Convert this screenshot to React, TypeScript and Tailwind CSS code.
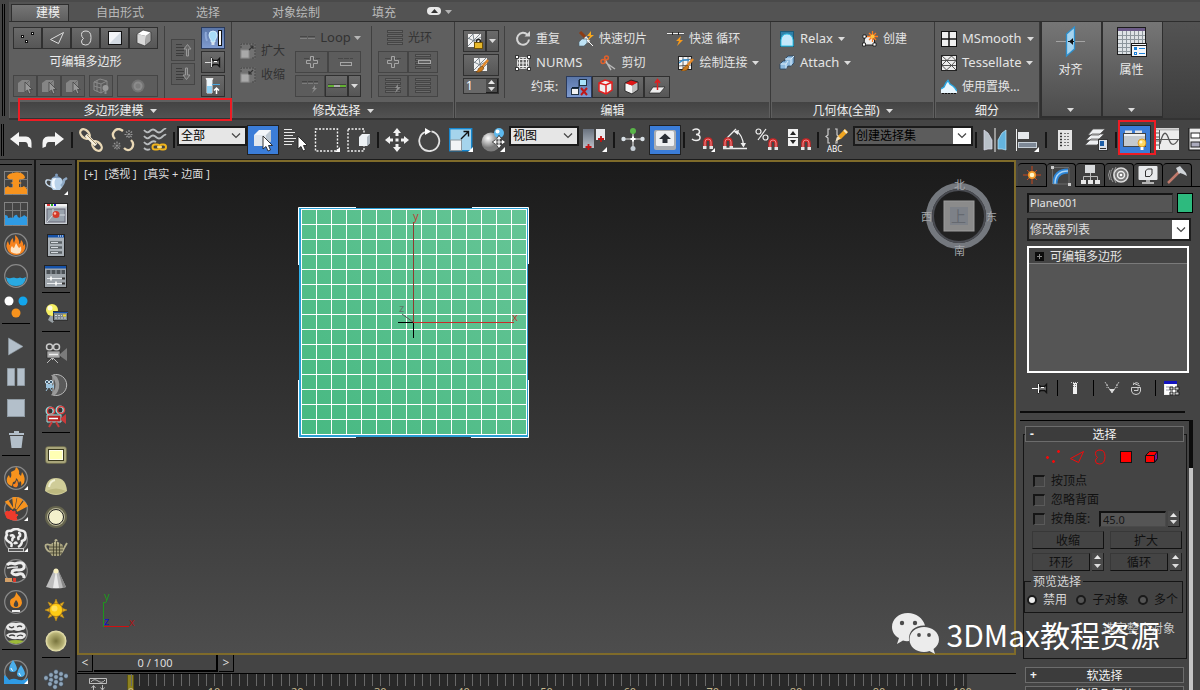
import React from "react";

type Kids = { children?: React.ReactNode };

function Ic({ w = 16, h, children }: Kids & { w?: number; h?: number }) {
  const hh = h ?? w;
  return (
    <svg width={w} height={hh} viewBox={`0 0 ${w} ${hh}`} fill="none" className="block shrink-0" aria-hidden="true">
      {children}
    </svg>
  );
}

/* ---------- shared pieces ---------- */

function Caret({ className = "" }: { className?: string }) {
  return (
    <svg width="7" height="4" viewBox="0 0 7 4" className={"block shrink-0 " + className} aria-hidden="true">
      <path d="M0 0H7L3.5 4Z" fill="#dcdcdc" />
    </svg>
  );
}

function Chevron() {
  return (
    <Ic w={10} h={6}>
      <path d="M1 .5L5 4.5L9 .5" stroke="#444" strokeWidth="1.2" />
    </Ic>
  );
}

function RBtn({ label, on, dim, className = "", children }: Kids & { label: string; on?: boolean; dim?: boolean; className?: string }) {
  return (
    <button
      type="button"
      aria-label={label}
      className={
        "flex h-[22px] shrink-0 items-center justify-center border " +
        (on
          ? "border-[#2a3a5c] bg-linear-to-b from-[#5a76a8] to-[#7f9bd0] "
          : dim
            ? "border-[#454545] bg-[#5c5c5c] "
            : "border-[#303030] bg-linear-to-b from-[#6a6a6a] to-[#565656] ") +
        className
      }
    >
      {children}
    </button>
  );
}

function Cmd({ icon, text, dim, caret, latin, className = "" }: { icon: React.ReactNode; text: string; dim?: boolean; caret?: boolean; latin?: boolean; className?: string }) {
  return (
    <button type="button" className={"flex h-6 shrink-0 items-center gap-[5px] whitespace-nowrap " + (dim ? "text-[#323232] " : "text-[#e4e4e4] ") + (latin ? "text-[13px] " : "text-xs ") + className}>
      {icon}
      <span>{text}</span>
      {caret && <Caret />}
    </button>
  );
}

function Panel({ title, caret, className = "", children }: Kids & { title: string; caret?: boolean; className?: string }) {
  return (
    <section className={"relative flex shrink-0 flex-col border-r border-[#3a3a3a] bg-[#5f5f5f] " + className}>
      <div className="flex min-h-0 flex-1">{children}</div>
      <button type="button" className="mx-px flex h-4 items-center justify-center gap-1.5 bg-linear-to-b from-[#434343] to-[#525252] pt-0.5 text-xs leading-4 text-[#f0f0f0]">
        {title}
        {caret && <Caret />}
      </button>
    </section>
  );
}

function Rule() {
  return <div className="mt-1 h-[72px] w-px shrink-0 bg-[#404040]" />;
}

function Steppers({ label }: { label: string }) {
  return (
    <span className="flex w-3 shrink-0 flex-col justify-around border-r border-b border-[#1e1e1e] bg-[#4b4b4b]">
      <button type="button" aria-label={label + "增加"} className="flex justify-center">
        <Ic w={7} h={4}><path d="M0 4H7L3.5 0Z" fill="#e8e8e8" /></Ic>
      </button>
      <button type="button" aria-label={label + "减少"} className="flex justify-center">
        <Caret />
      </button>
    </span>
  );
}

/* ---------- ribbon icons ---------- */

const Vertices = () => (
  <Ic w={18} h={16}>
    <g fill="#fff" stroke="#111">
      <rect x="2.5" y="5.5" width="2" height="2" />
      <rect x="12.5" y="2.5" width="2" height="2" />
      <rect x="6.5" y="10.5" width="2" height="2" />
    </g>
  </Ic>
);
const RedVertices = () => (
  <Ic w={18} h={16}>
    <path d="M3.5 7V10M2 8.5H5M14.5 1V4M13 2.5H16M9.5 11V14M8 12.5H11" stroke="#f20a0a" strokeWidth="1.4" />
  </Ic>
);
const EdgeTri = ({ c = "#ddd" }) => (
  <Ic w={18} h={16}>
    <path d="M2.5 9.5L15.5 2.5L10.5 13.5Z" stroke={c} />
  </Ic>
);
const Border = ({ c = "#ddd" }) => (
  <Ic w={16} h={16}>
    <path d="M3.5 4.5Q3.5 1 8 1Q13 1 13 7.5Q13 15 7.5 15Q3.5 15 3.5 12Q3.5 9.5 5.5 8.5Q3.5 7 3.5 4.5Z" stroke={c} />
  </Ic>
);
const Poly = () => (
  <Ic w={16} h={16}>
    <rect x="1.5" y="1.5" width="13" height="13" fill="#f3f5f8" stroke="#111" />
    <path d="M2 14L14 2V14Z" fill="#d3dae2" />
  </Ic>
);
const Cube = () => (
  <Ic w={18}>
    <path d="M2 5L8 1L16 3L11 7Z" fill="#fff" />
    <path d="M2 5L11 7L10 17L2 14Z" fill="#d9d9d9" />
    <path d="M11 7L16 3V12L10 17Z" fill="#a9a9a9" />
    <path d="M2 5L8 1L16 3V12L10 17L2 14Z" stroke="#333" strokeWidth=".7" />
  </Ic>
);
const ConsEdge = () => (
  <Ic w={18}>
    <path d="M3 5L9 2L16 4V12L10 16L3 13Z" fill="#f0f0f0" />
    <path d="M3 5L9 2L16 4V12L10 16L3 13ZM3 5L10 7L16 4M10 7V16" stroke="#e21f1f" strokeWidth="1.5" />
  </Ic>
);
const ConsFace = () => (
  <Ic w={18}>
    <path d="M3 5L10 7.5V16L3 13Z" fill="#f7f7f7" />
    <path d="M10 7.5L16 4V12L10 16Z" fill="#bdbdbd" />
    <path d="M3 5L9 2L16 4L10 7.5Z" fill="#e01515" />
    <path d="M3 5L9 2L16 4V12L10 16L3 13Z" stroke="#222" strokeWidth=".9" />
  </Ic>
);
const CubeCursor = () => (
  <Ic w={18} h={18}>
    <path d="M2 6L6 3H14V11L10 15H2Z" fill="#858585" />
    <path d="M10 15V7L14 3" stroke="#6a6a6a" />
    <path d="M9 5V15L11.5 13L13 17L15 16L13.5 12.5H16.5Z" fill="#9a9a9a" stroke="#444" strokeWidth=".8" />
  </Ic>
);
const CageBulb = () => (
  <Ic w={18} h={18}>
    <path d="M2 5L8 2L15 4V12L9 16L2 13ZM2 5L9 7L15 4M9 7V16M2 9L9 11M5 3.5V14.5" stroke="#8a8a8a" />
    <circle cx="13.5" cy="11" r="3" fill="#999" />
    <rect x="12.5" y="14" width="2" height="3" fill="#888" />
  </Ic>
);
const Disc = () => (
  <Ic w={16}>
    <circle cx="8" cy="8" r="6.5" fill="#737373" />
    <circle cx="8" cy="8" r="4.5" fill="#8b8b8b" />
    <circle cx="8" cy="8" r="2.5" fill="#7c7c7c" />
  </Ic>
);
const ListArrow = ({ up = false }) => (
  <Ic w={18} h={16}>
    <path d="M2 2.5H8M2 5.5H10M2 8.5H10M2 11.5H10M2 13.5H9" stroke="#3c3c3c" />
    {up ? (
      <path d="M12.5 14V7H10L13.5 2.5L17 7H14.5V14Z" fill="#666" stroke="#999" />
    ) : (
      <path d="M11.5 2V9H9L12.5 13.5L16 9H13.5V2Z" fill="#666" stroke="#999" />
    )}
  </Ic>
);
const BulbBar = () => (
  <Ic w={18} h={18}>
    <path d="M9 2Q13 2 13 6Q13 8.5 11 11V13H7V11Q5 8.5 5 6Q5 2 9 2Z" fill="#a8dcf7" stroke="#e0f4ff" strokeWidth=".8" />
    <rect x="7.5" y="13" width="3" height="3" fill="#d6e2ee" />
    <path d="M2 3Q1 7 3 12" stroke="#8fa9d8" strokeWidth="2" />
    <rect x="14.5" y="1.5" width="3" height="15" fill="#fff" stroke="#111" />
  </Ic>
);
const Pin = ({ c = "#dedede" }) => (
  <Ic w={18} h={12}>
    <path d="M1 6.5H8" stroke={c} />
    <path d="M7.5 2.5L9.5 4.5H13.5L15.5 2.5V10.5L13.5 8.5H9.5L7.5 10.5Z" fill="#777" stroke="#111" strokeWidth="1.4" />
    <path d="M10 5.5H13" stroke="#fff" />
    <path d="M7.5 2V11" stroke={c} />
  </Ic>
);
const Tube = () => (
  <Ic w={18} h={18}>
    <path d="M2 1.5H9L8 3V16H3V3Z" fill="#eaf6fc" stroke="#eee" />
    <path d="M3 9H8V16H3Z" fill="#8fd0f2" />
    <path d="M8 7.5H16" stroke="#4ba6dd" />
    <path d="M12.5 17V11M10 13.5L12.5 11L15 13.5" stroke="#fff" strokeWidth="1.5" />
  </Ic>
);
const Grow = ({ out = false }) => (
  <Ic w={16}>
    <rect x=".5" y=".5" width="15" height="15" fill="#727272" />
    <rect x="1" y="7" width="8" height="8" fill="#a9a9a9" stroke="#8a8a8a" />
    <path d="M1 5V1H15V15H11" stroke="#444" strokeDasharray="2 1" />
    {out ? (
      <path d="M9 7L13 3M10 3H13V6" stroke="#333" strokeWidth="1.2" />
    ) : (
      <path d="M13 3L9 7M9 4V7H12" stroke="#333" strokeWidth="1.2" />
    )}
  </Ic>
);
const Dashes = () => (
  <Ic w={18} h={6}>
    <path d="M1 1.5H17" stroke="#474747" strokeDasharray="7 1" />
    <path d="M1 3.5H17" stroke="#808080" strokeDasharray="7 1" />
  </Ic>
);
const Plus = () => (
  <Ic w={20} h={16}>
    <path d="M2 4.5H18" stroke="#474747" strokeDasharray="5 1" />
    <path d="M8.5 2.5H11.5V6.5H15.5V9.5H11.5V13.5H8.5V9.5H4.5V6.5H8.5Z" fill="#5f5f5f" stroke="#a6a6a6" />
  </Ic>
);
const Minus = () => (
  <Ic w={20} h={16}>
    <path d="M3 4.5H18" stroke="#474747" strokeDasharray="5 1" />
    <rect x="5.5" y="8.5" width="11" height="3" stroke="#a6a6a6" />
  </Ic>
);
const LoopBolt = () => (
  <Ic w={20} h={16}>
    <path d="M2 3.5H18" stroke="#454545" strokeDasharray="5 1" />
    <path d="M2 5.5H18" stroke="#7c7c7c" strokeDasharray="5 1" />
    <path d="M15 7L12 11H14L12 15L17 10H15Z" fill="#8d8d8d" />
  </Ic>
);
const GreenLoop = () => (
  <Ic w={18} h={6}>
    <path d="M0 3H18" stroke="#222" strokeWidth="3" />
    <path d="M0 3H6M12 3H18" stroke="#7adf3a" strokeWidth="1.5" />
    <path d="M6 3H12" stroke="#ddd" strokeWidth="1.5" />
  </Ic>
);
const Rings = ({ mid = false, bolt = false }) => (
  <Ic w={18} h={16}>
    <g stroke="#454545" fill="#6a6a6a">
      <rect x="1.5" y=".5" width="15" height="2" />
      <rect x="1.5" y="4.5" width="15" height="2" />
      <rect x="1.5" y="8.5" width="15" height="2" />
      <rect x="1.5" y="12.5" width="15" height="2" />
    </g>
    {mid && <rect x="4.5" y="6.5" width="12" height="3" fill="#5f5f5f" stroke="#a6a6a6" />}
    {bolt && <path d="M14 6L11 10H13L11 15L17 9H14Z" fill="#8d8d8d" />}
  </Ic>
);
function Brush() {
  return (
    <g>
      <path d="M16 4L10 11" stroke="#e2882a" strokeWidth="2.5" />
      <path d="M10 10L12 12Q10 17 4 16Q6 15 6.5 12.5Z" fill="#c9781b" stroke="#6a3c0a" strokeWidth=".6" />
    </g>
  );
}
const MeshTile = ({ lock = false }) => (
  <Ic w={18} h={18}>
    <rect x="2" y="2" width="13" height="13" fill="#f2f2f2" />
    <path d="M2 7L7 2M2 14L14 2M8 15L15 8M2 6L8 9L15 5M7 2L9 15" stroke="#6f7a82" strokeWidth=".9" />
    {lock ? (
      <g>
        <path d="M10.5 11V9.5Q10.5 7.5 12.5 7.5Q14.5 7.5 14.5 9.5V11" stroke="#222" strokeWidth="1.5" />
        <rect x="8.5" y="10.5" width="8" height="6" fill="#e8b92a" stroke="#6f5208" />
      </g>
    ) : (
      <Brush />
    )}
  </Ic>
);
const Repeat = () => (
  <Ic w={16}>
    <path d="M12.5 3.8A6 6 0 1 0 14 8.5" stroke="#d5d5d5" strokeWidth="2" />
    <path d="M9.5 5.5H15V0Z" fill="#d5d5d5" />
  </Ic>
);
const Nurms = () => (
  <Ic w={16}>
    <path d="M3 4.5H13M3 8H13M3 11.5H13M4.5 3V13M8 2V14M11.5 3V13" stroke="#f0f0f0" strokeWidth="1.2" />
    <rect x="2.5" y="2.5" width="11" height="11" rx="3" stroke="#ddd" />
    <path d="M.5 .5H3.5V3.5H.5ZM12.5 .5H15.5V3.5H12.5ZM.5 12.5H3.5V15.5H.5ZM12.5 12.5H15.5V15.5H12.5Z" fill="#fff" stroke="#111" strokeWidth=".8" />
  </Ic>
);
const QSlice = () => (
  <Ic w={16}>
    <path d="M7 6L11 11" stroke="#e9e9e9" strokeWidth="3" />
    <path d="M2 1L7 6" stroke="#8d3c14" strokeWidth="3" />
    <path d="M1 11L4 8H9V12L6 15H1Z" fill="#bfe3f5" stroke="#49636f" strokeWidth=".6" />
    <path d="M13 0L9 5H12L9 10L16 4H13Z" fill="#f8a81c" />
    <path d="M9 9L15 15" stroke="#fff" />
  </Ic>
);
const QLoop = () => (
  <Ic w={17} h={16}>
    <path d="M0 2.5H17" stroke="#222" strokeWidth="3" />
    <path d="M0 2.5H17" stroke="#eee" strokeWidth="1.5" strokeDasharray="5 1" />
    <path d="M14 5L9 10H12L10 15L16 9H13Z" fill="#f79a1c" />
  </Ic>
);
const Scissor = () => (
  <Ic w={16}>
    <path d="M5 7L15 14M5 4L8 10L11 15" stroke="#b9b9b9" strokeWidth="1.5" />
    <circle cx="3" cy="6.5" r="2" stroke="#e2602a" strokeWidth="1.5" />
    <circle cx="6.5" cy="2.8" r="1.9" stroke="#e2602a" strokeWidth="1.5" />
  </Ic>
);
const PaintConnect = () => (
  <Ic w={17} h={16}>
    <rect x="1.5" y="1.5" width="13" height="13" fill="#f4f4f4" stroke="#222" />
    <path d="M1.5 6L15 4M1.5 11L14 10M6 1.5V14.5M11 1.5V14" stroke="#444" strokeWidth=".8" />
    <path d="M2 8L6 5H12" stroke="#2d8fd6" strokeWidth="1.3" />
    <Brush />
  </Ic>
);
const ConsNone = () => (
  <Ic w={20} h={18}>
    <rect x="10.5" y="1.5" width="7" height="6" fill="#a9e2fb" stroke="#234" />
    <rect x="2.5" y="10.5" width="7" height="6" fill="#f2f2f2" stroke="#234" />
    <path d="M3 9.5H10V2" stroke="#123" />
    <path d="M12 10L18 17M18 10L12 17" stroke="#c01818" strokeWidth="2" />
  </Ic>
);
const ConsNormal = () => (
  <Ic w={18} h={18}>
    <path d="M1 15L5 9H17L12 15Z" fill="#eee" stroke="#222" strokeWidth=".7" />
    <path d="M9.5 12V3M7 5L9.5 1.5L12 5" stroke="#e02020" strokeWidth="1.5" />
  </Ic>
);
const Relax = () => (
  <Ic w={16}>
    <rect x="1.5" y=".5" width="13" height="15" fill="#2f7fa8" stroke="#1c5a78" />
    <path d="M2 15V9Q3 3 8 3Q13 3 14 9V15Z" fill="#c4e8fb" stroke="#35c6ea" />
  </Ic>
);
const Attach = () => (
  <Ic w={16}>
    <path d="M1 9L4 6H6V4L9 1H15V8L12 11H9L7 14H1Z" fill="#8db9de" stroke="#23405c" strokeWidth=".8" />
    <path d="M1.5 9H7V13.5M7 9L9 6M6 4H12V10.5M12 4L15 1" stroke="#d9ecfa" />
  </Ic>
);
const Create = () => (
  <Ic w={17} h={16}>
    <path d="M3.5 5.5H10L13.5 9V14H3Z" fill="#eee" stroke="#222" />
    <path d="M2 4H5V7H2ZM1.5 12H4.5V15H1.5ZM12 12H15V15H12Z" fill="#fff" stroke="#111" strokeWidth=".8" />
    <path d="M11.5 0V11M6 5.5H17M8 2L15 9M15 2L8 9" stroke="#ff7a1c" strokeWidth="1.3" />
    <circle cx="11.5" cy="5.5" r="2" fill="#ffc23c" />
  </Ic>
);
const MSmooth = () => (
  <Ic w={16}>
    <rect x=".5" y=".5" width="15" height="15" fill="#f0f0f0" stroke="#111" />
    <path d="M8 1V15M1 8H15" stroke="#111" strokeWidth="1.5" />
  </Ic>
);
const Tess = () => (
  <Ic w={16}>
    <rect x=".5" y=".5" width="15" height="15" fill="#ededed" stroke="#222" />
    <path d="M1 5.5H15M1 10.5H15M1 1L6 5.5L10.5 1L15 5.5M1 10L5.5 5.5L10.5 10.5L15 5.5M1 10.5L5.5 15L10.5 10.5L15 15" stroke="#444" strokeWidth=".9" />
  </Ic>
);
const Displace = () => (
  <Ic w={16}>
    <path d="M0 14V10L3 8L5 4L7 1L9 5L12 7L14 9L16 12V14Z" fill="#e9f6fd" />
    <path d="M0 10L3 8L5 4L7 1.5L9 5L12 7L14 9L16 12" stroke="#29a5df" strokeWidth="1.5" />
    <path d="M1 14.5H15" stroke="#111" strokeDasharray="2 1" />
  </Ic>
);
const AlignBig = () => (
  <Ic w={30} h={32}>
    <path d="M0 15.5H29" stroke="#a4a4a4" />
    <path d="M10.5 8L18.5 1V23L10.5 30Z" fill="#a6d4ef" stroke="#2f8fcc" strokeWidth="1.3" />
    <path d="M12 15.5H18M16.5 12.5V18.5" stroke="#111" />
    <path d="M13 15.5L16 13V18Z" fill="#111" />
  </Ic>
);
const PropsBig = () => (
  <Ic w={30} h={32}>
    <rect x=".5" y="1.5" width="28" height="27" fill="#dfe3e6" stroke="#1c1c1c" />
    <rect x="1" y="2" width="27" height="3" fill="#6b5a86" />
    <path d="M1 9.5H28M1 13.5H28M1 17.5H28M1 21.5H28M1 25.5H28M5.5 5V28M9.5 5V28M13.5 5V28M17.5 5V28M21.5 5V28M25.5 5V28" stroke="#8d969c" />
    <rect x="14.5" y="17.5" width="15" height="13" fill="#f4f6f8" stroke="#1c1c1c" />
    <path d="M15 19.5H29" stroke="#1c1c1c" />
    <rect x="17" y="21" width="3" height="3" fill="#1b80d8" />
    <rect x="17.5" y="26.5" width="2" height="2" stroke="#1b80d8" />
    <path d="M22 22.5H28M22 27.5H28" stroke="#1b80d8" />
  </Ic>
);

/* ---------- main toolbar icons ---------- */

const Fly = () => <path d="M24 24V19L19 24Z" fill="#fff" />;

const Undo = ({ flip = false }) => (
  <Ic w={24}>
    <path transform={flip ? "matrix(-1 0 0 1 24 0)" : undefined} d="M1 11L10 4V8.5H17Q22.5 9 22.5 15V20L19 18.5Q19 14 16 14H10V18Z" fill="#f4f4f4" />
  </Ic>
);
const Link = () => (
  <Ic w={24}>
    <g stroke="#ead9b6" strokeWidth="2.3">
      <ellipse cx="6" cy="6" rx="5.5" ry="3.8" transform="rotate(45 6 6)" />
      <ellipse cx="18" cy="18" rx="5.5" ry="3.8" transform="rotate(45 18 18)" />
      <path d="M7 7L17 17" strokeWidth="3.5" stroke="#f7efdc" />
    </g>
    <path d="M8 7L17 16" stroke="#9d8a66" />
  </Ic>
);
const Unlink = () => (
  <Ic w={24}>
    <g stroke="#ead9b6" strokeWidth="2.3">
      <path d="M12 3Q7 -1 3.5 3Q0 7 4 11" />
      <path d="M20 12Q24 16 20.5 20.5Q17 24 13 20" />
    </g>
    <path d="M18 2V11M13.5 6.5H22.5M15 3.5L21 9.5M21 3.5L15 9.5M6 13.5V22.5M1.5 18H10.5M3 15L9 21M9 15L3 21" stroke="#969696" strokeWidth="1.2" strokeDasharray="2 1" />
  </Ic>
);
const Bind = () => (
  <Ic w={24}>
    <path d="M1 2Q4 6 7 3T13 3T19 3T23 1M1 8Q4 12 7 9T13 9T19 9T23 7M1 14Q4 18 7 15T13 14M1 20Q4 23 7 21" stroke="#b9bcbe" strokeWidth="1.8" />
    <rect x="9.5" y="16.5" width="7" height="5" rx="2.5" stroke="#f0b41c" strokeWidth="2" />
    <rect x="16.5" y="16.5" width="6.5" height="5" rx="2.5" stroke="#f0b41c" strokeWidth="2" />
    <path d="M14 19H19" stroke="#fff0a0" strokeWidth="1.5" />
  </Ic>
);
const Pointer = ({ x = 12, y = 8 }) => (
  <path transform={`translate(${x} ${y})`} d="M0 0V13L3 10.5L5 15L7.5 14L5.5 9.5H9.5Z" fill="#fff" stroke="#222" strokeWidth=".9" />
);
const SelectObj = () => (
  <Ic w={24}>
    <path d="M3 7L8 2H20V13L15 18H3Z" fill="#f2f5f8" />
    <path d="M15 7L20 2V13L15 18Z" fill="#bcc7d1" />
    <path d="M3 7H15V18H3Z" fill="#e1e7ed" />
    <Pointer x={12} y={8} />
  </Ic>
);
const SelectName = () => (
  <Ic w={24}>
    <path d="M1 1.5H9M1 4.5H12M1 7.5H10M1 10.5H13M1 13.5H11M1 16.5H9" stroke="#e8e8e8" />
    <Pointer x={15} y={8} />
  </Ic>
);
const RectSel = () => (
  <Ic w={26} h={24}>
    <rect x="1.5" y="1" width="22" height="22" stroke="#f2f2f2" strokeWidth="1.4" strokeDasharray="2 1.5" />
    <path d="M26 24V19L21 24Z" fill="#fff" />
  </Ic>
);
const WinSel = () => (
  <Ic w={24}>
    <rect x="1" y="1" width="16" height="22" stroke="#f2f2f2" strokeWidth="1.4" strokeDasharray="2 1.5" />
    <path d="M12 9L15 6H23V15L20 18H12Z" fill="#edf1f4" />
    <path d="M20 18V9L23 6V15Z" fill="#aeb7bf" />
  </Ic>
);
const Move = () => (
  <Ic w={24}>
    <g fill="#f2f2f2">
      <path d="M12 0L16 5H13.5V8H10.5V5H8ZM12 24L16 19H13.5V16H10.5V19H8ZM0 12L5 8V10.5H8V13.5H5V16ZM24 12L19 8V10.5H16V13.5H19V16Z" />
      <rect x="10.5" y="10.5" width="3" height="3" />
    </g>
  </Ic>
);
const Rotate = () => (
  <Ic w={24}>
    <path d="M14.5 3.3A10 10 0 1 1 8 4" stroke="#e2e2e2" strokeWidth="1.8" />
    <path d="M8 0L14 3.5L8 7Z" fill="#fff" />
  </Ic>
);
const Scale = () => (
  <Ic w={24}>
    <rect x=".7" y=".7" width="22" height="22" fill="#a5d4ec" stroke="#1687cf" strokeWidth="1.4" />
    <rect x="1.5" y="12" width="11" height="10.5" fill="#f2f4f6" stroke="#8a959c" />
    <path d="M12 11L19 4M14.5 3.5H19.5V8.5" stroke="#111" strokeWidth="1.4" />
    <Fly />
  </Ic>
);
const Place = () => (
  <Ic w={24}>
    <defs>
      <radialGradient id="ball" cx=".35" cy=".3">
        <stop offset="0" stopColor="#fff" />
        <stop offset="1" stopColor="#7c7c7c" />
      </radialGradient>
    </defs>
    <circle cx="10" cy="14" r="9.5" fill="url(#ball)" />
    <circle cx="18" cy="5" r="5" fill="#5db9ee" />
    <circle cx="16.5" cy="3.5" r="2" fill="#fff" />
    <path d="M18 9.5V18.5M13.5 14H22.5M16.5 11L18 9L19.5 11M16.5 17L18 19L19.5 17M15 12.5L13 14L15 15.5M21 12.5L23 14L21 15.5" stroke="#333" strokeWidth="2.6" />
    <path d="M18 9.5V18.5M13.5 14H22.5M16.5 11L18 9L19.5 11M16.5 17L18 19L19.5 17M15 12.5L13 14L15 15.5M21 12.5L23 14L21 15.5" stroke="#fff" strokeWidth="1.2" />
    <Fly />
  </Ic>
);
const Pivot = () => (
  <Ic w={24}>
    <defs>
      <linearGradient id="pv" x1="0" y1="0" x2="0" y2="1">
        <stop offset="0" stopColor="#6a727e" />
        <stop offset="1" stopColor="#b9c0c9" />
      </linearGradient>
    </defs>
    <rect x="0" y="1" width="11" height="19" fill="url(#pv)" />
    <rect x="13" y="1" width="9" height="11" fill="#e8eaee" />
    <path d="M5.5 16V22M2.5 19H8.5M18 8V14M15 11H21" stroke="#c31414" strokeWidth="1.8" />
    <Fly />
  </Ic>
);
const Manip = () => (
  <Ic w={24}>
    <path d="M12 3V20M3 11H22" stroke="#dcdcdc" strokeWidth="1.2" />
    <circle cx="12" cy="3" r="3" fill="#59b548" />
    <circle cx="2.5" cy="11" r="2.2" fill="#d8e0e6" />
    <circle cx="21.5" cy="11" r="2.2" fill="#d8e0e6" />
    <circle cx="12" cy="20.5" r="2.5" fill="#c6ced6" />
    <path d="M9.5 11H14.5M12 8.5V13.5" stroke="#fff" strokeWidth="2" />
  </Ic>
);
const KeyToggle = () => (
  <Ic w={24}>
    <rect x="1" y="2" width="22" height="20" rx="2" fill="#a9adb2" />
    <rect x="3" y="3" width="18" height="15" rx="1.5" fill="#eef0f2" />
    <path d="M12 5.5L18 11H14.5V15H9.5V11H6Z" fill="#2a2f36" />
  </Ic>
);
const Magnet = ({ x = 12, y = 10 }) => (
  <g transform={`translate(${x} ${y})`}>
    <path d="M2 9V5Q2 2 5 2Q8 2 8 5V9" stroke="#c92626" strokeWidth="3.4" />
    <path d="M2 9V5Q2 2 5 2Q8 2 8 5V9" stroke="#f08a8a" strokeWidth="1" />
    <path d="M0 9H3.5V12H0ZM6.5 9H10V12H6.5Z" fill="#e4e4e4" />
  </g>
);
const Snap3 = () => (
  <Ic w={24}>
    <path d="M1.5 2.5Q3 1 5 1Q8.5 1 8.5 3.8Q8.5 6.3 5 6.5Q9 6.7 9 9.5Q9 12.5 5 12.5Q2.5 12.5 1 11" stroke="#eee" strokeWidth="1.5" />
    <Magnet x={12} y={9} />
    <path d="M24 24V20L20 24Z" fill="#fff" />
  </Ic>
);
const SnapAngle = () => (
  <Ic w={24}>
    <path d="M4 10L13 1M0 20.5H24M13 3Q20 7 20.5 18" stroke="#eee" strokeWidth="1.3" />
    <path d="M10.5 3.5L16 2L15 7ZM17.5 15H23L20.5 19.5Z" fill="#eee" />
    <Magnet x={0} y={9} />
  </Ic>
);
const SnapPct = () => (
  <Ic w={24}>
    <circle cx="3.5" cy="3.5" r="2.5" stroke="#eee" strokeWidth="1.2" />
    <circle cx="10.5" cy="9.5" r="2.5" stroke="#eee" strokeWidth="1.2" />
    <path d="M11 1L3 12" stroke="#eee" strokeWidth="1.2" />
    <Magnet x={13} y={10} />
  </Ic>
);
const SnapSpin = () => (
  <Ic w={24}>
    <rect x="1" y="1" width="10" height="8" fill="#f2f2f2" />
    <rect x="1" y="10" width="10" height="8" fill="#f2f2f2" />
    <path d="M3 7L6 3L9 7ZM3 12L6 16L9 12Z" fill="#222" />
    <Magnet x={14} y={10} />
  </Ic>
);
const NamedSets = () => (
  <div className="relative h-6 w-6">
    <Ic w={24}>
      <path d="M5 1H3V7L1 8.5L3 10V15H5M10 1H12V7L14 8.5L12 10V15H10" stroke="#ccc" strokeWidth="1.2" />
      <path d="M12 12L13 8L20 1L23 4L16 11Z" fill="#f0a520" />
      <path d="M19 2L22 5" stroke="#f5e6c0" strokeWidth="2" />
      <path d="M10 14L13 8L15.5 10.5Z" fill="#f3e1bd" />
    </Ic>
    <span className="absolute -bottom-px left-0.5 text-[8px] leading-[8px] text-white">ABC</span>
  </div>
);
const Mirror = () => (
  <Ic w={24}>
    <path d="M1 2L5 5L9 12V21H5L1 22Z" fill="#b9c1c9" stroke="#dde" strokeWidth=".7" />
    <path d="M23 2L19 5L15 12V21H19L23 22Z" fill="#64b4de" stroke="#bfe6fa" strokeWidth=".7" />
    <path d="M12 0V24" stroke="#eee" />
  </Ic>
);
const AlignIc = () => (
  <Ic w={24}>
    <path d="M1.5 1V23" stroke="#eee" />
    <rect x="3" y="4" width="11" height="7" fill="#e6e9ec" />
    <rect x="3.5" y="14.5" width="18" height="5" fill="#7d8896" stroke="#c5ced6" />
    <Fly />
  </Ic>
);
const SceneList = () => (
  <Ic w={24}>
    <rect x="5" y="2" width="14" height="20" fill="#e4e4e4" />
    <path d="M11 5.5H17M11 8.5H17M11 11.5H17M11 14.5H17M11 17.5H17" stroke="#777" strokeDasharray="2 1" />
    <path d="M7 5.5H9M7 8.5H9M7 11.5H9M7 14.5H9M7 17.5H9" stroke="#333" strokeWidth="1.5" />
  </Ic>
);
const Layers = () => (
  <Ic w={24}>
    <path d="M0 17L6 11H18L12 17ZM1 12L7 6H19L13 12ZM3 7L8 1H20L14 7Z" fill="#eef0f2" stroke="#555" strokeWidth=".8" />
    <rect x="13.5" y="11.5" width="9" height="11" fill="#dbe2ea" stroke="#333" />
    <rect x="15" y="13" width="4" height="5" fill="#1c5ea8" />
    <path d="M15 20.5H21" stroke="#333" />
  </Ic>
);
const RibbonTog = () => (
  <Ic w={28} h={24}>
    <rect x="4" y="2.5" width="7" height="4" fill="#dfe2e5" />
    <rect x="14" y="2.5" width="7" height="4" fill="#dfe2e5" />
    <rect x="2.5" y="5.5" width="22" height="13" fill="#c4c9ce" stroke="#444" />
    <path d="M3 7H24" stroke="#eef0f2" strokeWidth="2" />
    <circle cx="21" cy="15" r="4" fill="#ffd860" stroke="#d98d12" strokeWidth=".8" />
    <circle cx="20" cy="14" r="1.5" fill="#fff8dc" />
    <path d="M21 19V22" stroke="#fff" strokeWidth="3" />
  </Ic>
);
const Curves = () => (
  <Ic w={24}>
    <rect x="0" y="0" width="24" height="22" fill="#ececec" />
    <path d="M0 1.5H24" stroke="#bbb" strokeWidth="2" />
    <path d="M4.5 2V21M1 5H4M1 9H4M1 13H4M1 17H4M0 11.5H24" stroke="#555" />
    <path d="M5 16Q9 -1 13 9Q17 22 23 12" stroke="#555" strokeWidth="1.3" />
  </Ic>
);
const Schematic = () => (
  <Ic w={24}>
    <rect x="1" y="0" width="22" height="22" fill="#ececec" stroke="#111" />
    <rect x="3" y="5" width="9" height="5" fill="#fff" stroke="#222" />
    <rect x="3" y="14" width="9" height="5" fill="#aab" stroke="#222" />
  </Ic>
);

/* ---------- side bar icons ---------- */

const Ring = ({ children }: Kids) => (
  <Ic w={24}>
    <circle cx="12" cy="12" r="11.3" stroke="#8a8a8a" strokeWidth="1.2" />
    {children}
  </Ic>
);
const FlyW = () => <path d="M24 24V20L20 24Z" fill="#fff" />;
const GridBox = ({ children }: Kids) => (
  <Ic w={24}>
    <rect x=".5" y=".5" width="23" height="23" stroke="#828282" />
    <path d="M8.5 0V24M16.5 0V24M0 8.5H24M0 16.5H24" stroke="#7a7a7a" />
    {children}
  </Ic>
);

const Nuke = () => (
  <GridBox>
    <path d="M3 6Q4 2.5 9 2Q13 .5 17 2Q21 4 21 7Q18 9 15.5 8L15 11L18 12L15 13V16Q18 17 20 15L23 18V23H1V17L4 15Q6 18 9 16V13L6 12L9 11L8.5 8Q4 9 3 6Z" fill="#f7931e" />
  </GridBox>
);
const Ocean = () => (
  <GridBox>
    <path d="M1 13Q4 13 4 16Q7 15 9 16Q11 12 13 13Q14 17 17 15Q20 14 20 13L23 15V23H1Z" fill="#2f9be4" />
  </GridBox>
);
const FireBall = () => (
  <Ring>
    <path d="M4 18Q1 12 4 8Q5 12 6 12Q6 7 9 5Q9 9 10 10Q12 6 11 2Q16 6 15 11Q17 10 17 7Q20 10 19 13L21 11Q22 15 20 18Q17 22 12 22Q7 22 4 18Z" fill="#f7831e" />
    <path d="M7 19Q6 15 8 13Q9 15 10 15Q11 13 12 10Q14 14 15 15Q17 14 17 13Q18 17 16 20Q12 22 7 19Z" fill="#fde4c4" />
  </Ring>
);
const Pool = () => (
  <Ring>
    <path d="M2 13Q5 15 7 14L10 13.5Q13 15 16 13.5Q19 15 22 13Q21 22 12 22Q3 22 2 13Z" fill="#29a9e1" />
  </Ring>
);
const Dots = () => (
  <Ic w={24}>
    <circle cx="5" cy="6" r="4.5" fill="#fff" />
    <circle cx="19" cy="6" r="4.5" fill="#12a5ec" />
    <circle cx="12" cy="18" r="4.5" fill="#f7931e" />
  </Ic>
);
const Play = () => (<Ic w={24}><path d="M4.5 4L19 12.5L4.5 21Z" fill="#b3bfca" stroke="#8f9aa3" strokeWidth=".6" /></Ic>);
const Pause = () => (<Ic w={24}><path d="M3.5 3.5H10.5V20.5H3.5ZM13.5 3.5H20.5V20.5H13.5Z" fill="#b3bfca" stroke="#8f9aa3" /></Ic>);
const Stop = () => (<Ic w={24}><rect x="3.5" y="3.5" width="17" height="17" fill="#b3bfca" stroke="#8f9aa3" /></Ic>);
const Trash = () => (
  <Ic w={24}>
    <path d="M6 9H19L17.5 21H7.5ZM5 6H20V8H5ZM10 4H15V6H10Z" fill="#b3bfca" />
  </Ic>
);
const FireA = () => (
  <Ring>
    <path d="M3 16Q2 12 5 9L6 12Q8 11 7 6L11 4L12 1Q16 4 15 8L17 10L18 6Q22 12 20 17L17 20Q18 16 16 15L15 17Q14 13 12 12Q12 16 9 16L8 20Q4 19 3 16Z" fill="#f7931e" />
    <path d="M9 20Q9 17 11 18Q12 15 13 14Q15 19 13 21Q11 22 9 20Z" fill="#f7831e" />
    <FlyW />
  </Ring>
);
const Burst = () => (
  <Ring>
    <path d="M9 1L12 0L10 11ZM14 1L18 3L12 12ZM20 5L23 9L13 14ZM2 5L4 4L9 12Z" fill="#f7931e" stroke="#f7931e" strokeWidth="1.5" />
    <path d="M1 16L3 14L5 15L7 13L9 15L11 14L11 17L14 18L12 20L13 23L9 23L3 21Z" fill="#ef3b2c" stroke="#ef3b2c" />
    <FlyW />
  </Ring>
);
const Cloud = () => (
  <Ring>
    <path d="M7 19Q9 15 5 14Q0 11 3 7Q1 2 7 3Q12 -1 16 2.5Q22 2 21.5 8Q22 12 18 13Q18 17 14 19" stroke="#eee" strokeWidth="2.5" />
    <path d="M6 8Q9 6 10 9Q7 11 9 13M14 5Q17 5 16 8Q13 9 15 12M10 16Q12 13 13 16" stroke="#eee" strokeWidth="2.5" />
    <rect x="4.5" y="20.5" width="15" height="3" fill="#555" stroke="#ccc" />
    <FlyW />
  </Ring>
);
const Smoke = () => (
  <Ring>
    <path d="M3 6Q6 3 11 5Q18 2 20 6Q21 11 15 11Q8 10 8 14Q10 17 15 15Q20 14 20 19" stroke="#ececec" strokeWidth="3" />
    <path d="M3 9Q8 8 14 8" stroke="#ddd" strokeWidth="1.5" />
    <rect x="1" y="19" width="7" height="4" fill="#d3a068" />
    <rect x="9" y="19" width="3" height="4" fill="#e03a2c" />
  </Ring>
);
const Candle = () => (
  <Ring>
    <path d="M12 2Q14 5 16 7Q18 10 18 13Q17 18 12 18Q6 18 6 12Q6 9 9 8Q12 6 12 2Z" fill="#f7931e" />
    <path d="M12 10Q15 13 14 16Q12 18 10 16Q9 14 12 10Z" fill="#444" />
    <rect x="8" y="20" width="8" height="2" fill="#eee" />
  </Ring>
);
const Haze = () => (
  <Ring>
    <path d="M2 6Q4 1 12 2Q20 1 21 5Q22 9 18 9Q14 11 10 9Q3 11 2 6ZM2 14Q5 11 12 12Q21 10 22 14Q21 19 14 18Q5 19 2 14Z" fill="#e9e9e9" />
    <path d="M5 5.5Q8 8 10 5.5M13 6Q16 4 18 6M5 15Q8 13 11 15M13 15.5Q16 13 19 15" stroke="#444" strokeWidth="1.3" />
    <path d="M4 20Q12 18 20 20Q16 23 12 23Q8 23 4 20Z" fill="#9dbb3a" />
  </Ring>
);
const Drops = () => (
  <Ring>
    <path d="M9 0Q13 6 13 9Q12 12 9 12Q5 12 5 9Q5 6 9 0ZM17 5Q21 11 21 14Q20 17 17 17Q13 17 13 14Q13 11 17 5Z" fill="#4aaeea" />
    <path d="M0 15Q4 17 5 20Q9 18 12 19Q19 22 24 18V24H0Z" fill="#2f9be4" />
    <path d="M7 8Q7 10 9 10.5M15 13Q15 15 17 15.5" stroke="#fff" />
    <FlyW />
  </Ring>
);

const Teapot = () => (
  <Ic w={24}>
    <path d="M8 7H17Q22 13 16 19H9Q4 14 8 7Z" fill="#b9d2ea" />
    <path d="M9 8Q6 12 9 17L12 18Q9 12 12 7Z" fill="#f3f9ff" />
    <path d="M8 10Q1 7 2 12Q3 15 8 16" stroke="#c9dcee" strokeWidth="1.5" />
    <path d="M17 15Q20 13 20 9L23 7" stroke="#8fa9c4" strokeWidth="2.5" />
    <path d="M8 7Q12 3 17 7Z" fill="#7d9abc" />
    <circle cx="12.5" cy="4" r="1.5" fill="#7d9abc" />
    <FlyW />
  </Ic>
);
const Render = () => (
  <Ic w={24}>
    <rect x=".5" y="1.5" width="23" height="21" fill="#c9ced3" stroke="#222" />
    <rect x="1" y="2" width="22" height="2.5" fill="#f3f3f3" />
    <path d="M3 3H6" stroke="#d33" strokeWidth="2" />
    <path d="M7 3H9" stroke="#2a2" strokeWidth="2" />
    <path d="M10 3H12" stroke="#22c" strokeWidth="2" />
    <rect x="3" y="7" width="18" height="13" fill="#99a3ad" stroke="#667" />
    <path d="M3 20L9 13V7M9 13H21" stroke="#d5dbe1" />
    <circle cx="12" cy="12.5" r="3.5" fill="#d23a2a" />
    <circle cx="11" cy="11.5" r="1.2" fill="#ffb9a8" />
  </Ic>
);
const Setup = () => (
  <Ic w={24}>
    <rect x="3.5" y="1.5" width="17" height="22" fill="#a9b0b6" stroke="#222" />
    <rect x="4" y="2" width="16" height="2.5" fill="#1652a8" />
    <path d="M14 3H15M16 3H17M18 3H19" stroke="#fff" />
    <path d="M6 9.5H18M6 14.5H18M6 19.5H18" stroke="#5b6166" strokeWidth="2.5" />
    <path d="M7 9.5H14M7 14.5H14M7 19.5H14" stroke="#d5dadf" strokeWidth="1" />
  </Ic>
);
const Sliders = () => (
  <Ic w={24}>
    <rect x=".5" y="1.5" width="22" height="22" fill="#9ea5ab" stroke="#222" />
    <rect x="1" y="2" width="21" height="2.5" fill="#1652a8" />
    <path d="M2.5 6H6.5V10H2.5ZM7.5 6H11.5V10H7.5ZM12.5 6H16.5V10H12.5ZM17.5 6H21V10H17.5Z" fill="#4b5156" />
    <path d="M3 14.5H18M3 19.5H18" stroke="#e9ecef" />
    <path d="M7 12.5V16.5M12 17.5V21.5" stroke="#fff" strokeWidth="1.5" />
    <path d="M18 14.5H21M18 19.5H21" stroke="#333" strokeWidth="2" />
  </Ic>
);
const LightPanel = () => (
  <Ic w={24}>
    <circle cx="8" cy="7" r="6" fill="#f6ef62" />
    <circle cx="6" cy="5" r="2.5" fill="#fffde0" />
    <path d="M6 13H11V17L8.5 20L4 17Z" fill="#98a0a4" />
    <rect x="9.5" y="8.5" width="14" height="9" fill="#7d868c" stroke="#333" />
    <path d="M9 9.5H24" stroke="#1652a8" />
    <path d="M11 12.5H18M11 15H22" stroke="#cfd5d9" strokeDasharray="2 1" />
    <path d="M19 12.5H22" stroke="#f2da30" strokeWidth="2" />
  </Ic>
);
const Camera = () => (
  <Ic w={24}>
    <circle cx="5.5" cy="5" r="3" fill="#444" stroke="#c9c9c9" strokeWidth="1.5" />
    <circle cx="12.5" cy="5" r="3" fill="#444" stroke="#c9c9c9" strokeWidth="1.5" />
    <path d="M3 9H16V16H3Z" fill="#a9a9a9" stroke="#222" strokeWidth=".6" />
    <path d="M16 12L23 6V19L16 14Z" fill="#7b7b7b" />
    <path d="M8 16L3 21M9 16L14 21M8.5 16V18" stroke="#bbb" />
    <path d="M5 12.5H14" stroke="#eee" strokeWidth="1.5" />
  </Ic>
);
const DomeCam = () => (
  <Ic w={24}>
    <path d="M9 2A10.500 10.500 0 1 1 9 22Z" fill="#5a5a5a" stroke="#bbb" />
    <path d="M7 2Q16 12 7 22Q11 24 14 18Q17 11 13 4Q10 1 7 2Z" fill="#9a9a9a" />
    <circle cx="3" cy="9" r="1.6" fill="#27465e" stroke="#cfe4f2" />
    <circle cx="7" cy="9" r="1.6" fill="#27465e" stroke="#cfe4f2" />
    <path d="M2 11H8V15H2ZM8 13L10 11V16L8 14Z" fill="#9cc3dd" />
    <path d="M4 15L2 18M6 15L8 18" stroke="#9cc3dd" />
  </Ic>
);
const Camera3D = () => (
  <Ic w={24}>
    <circle cx="6" cy="7" r="3.5" fill="#333" stroke="#8fe5e5" strokeWidth="2" />
    <circle cx="7" cy="7" r="3.5" stroke="#e04040" strokeWidth="1.5" />
    <circle cx="16" cy="6" r="3.5" fill="#333" stroke="#8fe5e5" strokeWidth="2" />
    <circle cx="17" cy="6" r="3.5" stroke="#e04040" strokeWidth="1.5" />
    <path d="M3 11H17V18H3Z" fill="#b52222" stroke="#8fe5e5" />
    <path d="M17 14L22 10V20L17 16Z" fill="#c93a3a" />
    <path d="M5 14.5H14" stroke="#fff" strokeWidth="1.5" />
    <path d="M8 18L5 23M12 18L15 23" stroke="#c93a3a" strokeWidth="2" />
  </Ic>
);
const AreaLight = () => (
  <Ic w={24}>
    <rect x="1" y="3" width="22" height="18" rx="4" fill="#6f6d50" />
    <rect x="2" y="4" width="20" height="16" rx="2" fill="#a8a57a" />
    <rect x="4.5" y="6.5" width="15" height="11" fill="#ffffb4" stroke="#3a391f" />
    <rect x="5.5" y="7.5" width="13" height="9" stroke="#fffff0" />
  </Ic>
);
const DomeLight = () => (
  <Ic w={24}>
    <path d="M1 17Q2 4 12 4Q22 4 23 17Q12 25 1 17Z" fill="#cfcc98" />
    <path d="M2 17Q12 12 22 17Q12 23 2 17Z" fill="#bdb980" />
    <path d="M5 13Q6 7 11 6" stroke="#f2f2d6" strokeWidth="2" />
  </Ic>
);
const SphereLight = () => (
  <Ic w={24}>
    <circle cx="12" cy="12" r="11" fill="#66654e" />
    <circle cx="12" cy="12" r="9" fill="#b9b698" />
    <circle cx="12" cy="12" r="7.5" fill="#f3f0cc" stroke="#222" />
  </Ic>
);
const MeshPot = () => (
  <Ic w={24}>
    <path d="M6 8H18Q22 14 16 20H8Q3 14 6 8Z" fill="#a5a07c" />
    <path d="M6 9Q0 7 2 12Q3 15 7 16M18 16Q20 12 23 7" stroke="#b5b08c" strokeWidth="1.8" />
    <path d="M7 8Q12 3 17 8Z" fill="#b9b490" />
    <circle cx="12" cy="4.5" r="1.5" fill="#b9b490" />
    <path d="M5 11H20M5 14H19M6 17H18M9.5 6V20M12.5 5V20M15.5 7V20" stroke="#3f3d2c" strokeWidth=".8" />
  </Ic>
);
const Spot = () => (
  <Ic w={24}>
    <path d="M10 3H14L22 20Q12 23 2 20Z" fill="#bdbdbd" />
    <path d="M12 3L9 21H15Z" fill="#e9e9e9" />
    <path d="M14 3L22 20L19 21Z" fill="#888" />
    <circle cx="12" cy="4" r="2.5" fill="#f8f0c0" />
  </Ic>
);
const Sun = () => (
  <Ic w={24}>
    <path d="M12 1L13.5 5H10.5ZM12 23L13.5 19H10.5ZM1 12L5 10.5V13.5ZM23 12L19 10.5V13.5ZM4 4L8 6L6 8ZM20 4L18 8L16 6ZM4 20L6 16L8 18ZM20 20L16 18L18 16Z" fill="#f0b41c" stroke="#b98a1a" strokeWidth=".6" />
    <circle cx="12" cy="12" r="6.5" fill="#ffcc14" stroke="#c98c10" strokeWidth=".8" />
    <circle cx="10.5" cy="10.5" r="3" fill="#ffdf5a" />
  </Ic>
);
const Ambient = () => (
  <Ic w={24}>
    <defs>
      <radialGradient id="amb">
        <stop offset="0" stopColor="#77733c" />
        <stop offset=".75" stopColor="#b9b478" />
        <stop offset="1" stopColor="#efe9b8" />
      </radialGradient>
    </defs>
    <circle cx="12" cy="12" r="10.5" fill="url(#amb)" />
  </Ic>
);
const Scatter = () => (
  <Ic w={24}>
    <g fill="#8fa6bb" stroke="#2c3640" strokeWidth=".6">
      {[[12, 4], [17, 6], [22, 8], [7, 7], [12, 9], [17, 11], [2, 10], [7, 12], [12, 14], [6, 16], [17, 16], [11, 19]].map(([x, y]) => (
        <circle key={`${x}-${y}`} cx={x} cy={y} r="2.4" />
      ))}
    </g>
  </Ic>
);

/* ---------- command panel icons ---------- */

const TabStar = () => (
  <Ic w={20}>
    <path d="M10 1V19M1 10H19M5 5L15 15M15 5L5 15" stroke="#c9491c" />
    <circle cx="10" cy="10" r="4" fill="#f59a2a" />
    <circle cx="10" cy="10" r="2.3" fill="#fff6c8" />
  </Ic>
);
const TabModify = () => (
  <Ic w={20}>
    <path d="M4 18Q4 5 17 5" stroke="#2d86d8" strokeWidth="5" />
    <path d="M4 18Q4 5 17 5" stroke="#a9d4f5" strokeWidth="1.5" />
    <path d="M1.5 2V18M2 1.5H18M18 2V18H2" stroke="#888" strokeWidth=".6" />
    <path d="M0 0H3V3H0ZM17 17H20V20H17Z" fill="#ccc" />
  </Ic>
);
const TabHier = () => (
  <Ic w={20}>
    <rect x="5" y="0" width="10" height="8" fill="#d8dadc" />
    <path d="M10.5 8V12M3.5 15V11.5H17.5V15M10.5 11V15" stroke="#bbb" />
    <path d="M1 15H6V19H1ZM8 15H13V19H8ZM15 15H20V19H15Z" fill="#e8e8e8" />
  </Ic>
);
const TabMotion = () => (
  <Ic w={22} h={20}>
    <path d="M5 3Q0 10 5 17M2 5Q-1 10 2 15M8 2Q3 10 8 18" stroke="#999" />
    <circle cx="13" cy="10" r="7" fill="#777" stroke="#ddd" strokeWidth="1.5" />
    <circle cx="13" cy="10" r="3.5" stroke="#eee" strokeWidth="1.5" />
    <circle cx="13" cy="10" r="1.3" fill="#fff" />
  </Ic>
);
const TabDisplay = () => (
  <Ic w={20}>
    <rect x=".5" y="1" width="19" height="14" rx="1" fill="#e8eaec" />
    <path d="M7.5 6L9.5 4H14V9L12 11.5H7.5Z" stroke="#333" />
    <path d="M8 16H12" stroke="#aaa" strokeWidth="2" />
    <path d="M4 18H16" stroke="#ddd" strokeWidth="1.5" />
  </Ic>
);
const TabUtil = () => (
  <Ic w={20}>
    <path d="M1 18L12 7" stroke="#c07a6c" strokeWidth="2.5" />
    <path d="M9 3L13 1L19 8L20 11L16 9L13 8L12 9Z" fill="#d0d4d8" />
  </Ic>
);
const StackTube = () => (
  <Ic w={8} h={14}>
    <path d="M0 1.5H8" stroke="#bbb" strokeDasharray="1 1" />
    <rect x="2" y="2" width="4" height="11" fill="#f0f0f0" />
    <path d="M2 3.5H6M2 5.5H6" stroke="#777" strokeDasharray="1 1" />
  </Ic>
);
const Unique = () => (
  <Ic w={16} h={14}>
    <path d="M1 1L8 12L15 1M3 3V7M13 3V7" stroke="#bbb" strokeDasharray="2 1" />
    <path d="M5 8H11L8 12Z" fill="#ddd" />
  </Ic>
);
const Mouse = () => (
  <Ic w={12} h={14}>
    <path d="M1.5 6.5H10.5V10Q10 13.5 6 13.5Q2 13.5 1.5 10ZM3 4Q6 0 9 3M3 2L10 5" stroke="#ccc" />
    <path d="M4 9.5H8V6.5" stroke="#ccc" />
  </Ic>
);
const ConfigSets = () => (
  <Ic w={16} h={15}>
    <rect x=".5" y=".5" width="12" height="13" fill="#fff" stroke="#eee" />
    <rect x="0" y="0" width="13" height="3" fill="#1414c0" />
    <path d="M2 6H6M2 9H6" stroke="#99a" />
    <path d="M6 6H9V9H6ZM11 6H15V9H11ZM6 11H9V14H6ZM11 11H15V14H11Z" fill="#ccc" stroke="#222" />
  </Ic>
);

/* ---------- sections ---------- */

function Ribbon() {
  const tabs: [string, string][] = [
    ["自由形式", "ml-[27px]"],
    ["选择", "ml-[52px]"],
    ["对象绘制", "ml-[52px]"],
    ["填充", "ml-[52px]"],
  ];
  return (
    <header className="flex shrink-0 bg-[#444]">
      <div className="my-1 mr-1 ml-[2px] w-[3px] shrink-0 border-x border-black" />
      <div className="flex min-w-0 flex-1 flex-col">
        <nav className="flex h-[22px] items-end border-t-2 border-b border-t-[#4a4a4a] border-b-[#2e2e2e] bg-[#535353] text-xs text-[#b9b9b9]">
          <button type="button" className="ml-[2px] flex h-[17px] w-[58px] shrink-0 items-center justify-center border border-b-0 border-[#2e2e2e] bg-linear-to-b from-[#767676] to-[#5f5f5f] pl-4 leading-4 text-[#f0f0f0]">
            建模
          </button>
          {tabs.map(([t, m]) => (
            <button key={t} type="button" className={"h-[17px] shrink-0 leading-[18px] " + m}>
              {t}
            </button>
          ))}
          <button type="button" aria-label="最小化功能区" className="mb-[6px] ml-[31px] flex h-2 w-3.5 items-center justify-center rounded-sm bg-[#e8e8e8]">
            <Ic w={7} h={4}><path d="M0 4H7L3.5 0Z" fill="#333" /></Ic>
          </button>
          <Caret className="mb-[7px] ml-1 opacity-70" />
        </nav>

        <div className="flex h-[98px] border-b-2 border-[#333] bg-linear-to-b from-[#535353] to-[#3c3c3c]">
          <Panel title="多边形建模" caret className="w-[223px]">
            <div className="flex gap-1.5 pl-1">
              <div className="flex w-[145px] flex-col pt-[5px]">
                <div className="flex *:flex-1">
                  <RBtn label="顶点"><Vertices /></RBtn>
                  <RBtn label="边"><EdgeTri /></RBtn>
                  <RBtn label="边界"><Border /></RBtn>
                  <RBtn label="多边形"><Poly /></RBtn>
                  <RBtn label="元素"><Cube /></RBtn>
                </div>
                <div className="flex h-[26px] items-center justify-center text-xs text-[#ececec]">可编辑多边形</div>
                <div className="flex gap-1">
                  <div className="flex">
                    <RBtn dim label="预览关闭" className="w-6"><CubeCursor /></RBtn>
                    <RBtn dim label="预览子对象" className="w-6"><CubeCursor /></RBtn>
                    <RBtn dim label="预览多个" className="w-6"><CubeCursor /></RBtn>
                  </div>
                  <RBtn dim label="忽略背面" className="w-6"><CageBulb /></RBtn>
                  <RBtn dim label="使用软选择" className="w-[41px]"><Disc /></RBtn>
                </div>
              </div>
              <Rule />
              <div className="flex flex-col gap-0.5 pt-[17px]">
                <RBtn dim label="上一个修改器" className="w-6"><ListArrow up /></RBtn>
                <RBtn dim label="下一个修改器" className="w-6"><ListArrow /></RBtn>
              </div>
              <div className="flex flex-col gap-0.5 pt-[5px]">
                <RBtn on label="显示最终结果" className="w-6"><BulbBar /></RBtn>
                <RBtn label="锁定堆栈" className="w-6"><Pin /></RBtn>
                <RBtn label="切换命令面板" className="w-6"><Tube /></RBtn>
              </div>
            </div>
            <div className="pointer-events-none absolute top-[76px] -right-px -bottom-[3px] left-[9px] z-10 border-2 border-[#ee1c24]" />
          </Panel>

          <Panel title="修改选择" caret className="w-[223px]">
            <div className="flex gap-[10px] pl-2">
              <div className="flex flex-col pt-[17px]">
                <Cmd dim icon={<Grow out />} text="扩大" />
                <Cmd dim icon={<Grow />} text="收缩" />
              </div>
              <div className="flex w-[66px] flex-col gap-0.5 pt-[5px]">
                <button type="button" className="flex h-[22px] items-center justify-between pl-1 text-[13px] text-[#323232]">
                  <Dashes />
                  Loop
                  <Caret className="opacity-70" />
                </button>
                <div className="flex *:flex-1">
                  <RBtn dim label="增长循环"><Plus /></RBtn>
                  <RBtn dim label="收缩循环"><Minus /></RBtn>
                </div>
                <div className="flex">
                  <RBtn dim label="循环模式" className="w-[30px]"><LoopBolt /></RBtn>
                  <RBtn label="点循环" className="w-[23px]"><GreenLoop /></RBtn>
                  <RBtn label="点循环选项" className="w-[13px]"><Caret /></RBtn>
                </div>
              </div>
              <Rule />
              <div className="-ml-1 flex w-[60px] flex-col gap-0.5 pt-[5px]">
                <button type="button" className="flex h-[22px] items-center gap-1 pl-2 text-xs text-[#323232]">
                  <Rings />
                  光环
                </button>
                <div className="flex *:flex-1">
                  <RBtn dim label="增长环"><Plus /></RBtn>
                  <RBtn dim label="收缩环"><Rings mid /></RBtn>
                </div>
                <div className="flex *:flex-1">
                  <RBtn dim label="环模式"><Rings bolt /></RBtn>
                  <RBtn dim label="点环"><Rings /></RBtn>
                </div>
              </div>
            </div>
          </Panel>

          <Panel title="编辑" className="w-[316px]">
            <div className="flex gap-[5px] pl-2">
              <div className="flex w-9 flex-col gap-0.5 pt-2">
                <div className="flex">
                  <RBtn label="保留UV" className="w-[23px]"><MeshTile lock /></RBtn>
                  <RBtn label="保留UV选项" className="w-[13px]"><Caret /></RBtn>
                </div>
                <RBtn label="调整"><MeshTile /></RBtn>
                <div className="flex h-4 border border-[#333] bg-[#686868]">
                  <input aria-label="数值" defaultValue="1" className="w-full min-w-0 bg-transparent pl-0.5 text-xs text-white outline-none" />
                  <Steppers label="数值" />
                </div>
              </div>
              <Rule />
              <div className="ml-[5px] flex flex-col pt-[5px]">
                <div className="flex">
                  <Cmd icon={<Repeat />} text="重复" />
                  <Cmd icon={<QSlice />} text="快速切片" className="ml-[18px]" />
                  <Cmd icon={<QLoop />} text="快速 循环" className="ml-5" />
                </div>
                <div className="flex">
                  <Cmd latin icon={<Nurms />} text="NURMS" />
                  <Cmd icon={<Scissor />} text="剪切" className="ml-[18px]" />
                  <Cmd caret icon={<PaintConnect />} text="绘制连接" className="ml-8" />
                </div>
                <div className="flex h-6 items-center pl-4">
                  <span className="mr-2 text-xs text-[#e4e4e4]">约束:</span>
                  <RBtn on label="无约束" className="w-[26px]"><ConsNone /></RBtn>
                  <RBtn label="约束到边" className="w-[26px]"><ConsEdge /></RBtn>
                  <RBtn label="约束到面" className="w-[26px]"><ConsFace /></RBtn>
                  <RBtn label="约束到法线" className="w-[26px]"><ConsNormal /></RBtn>
                </div>
              </div>
            </div>
          </Panel>

          <Panel title="几何体(全部)" caret className="w-[164px]">
            <div className="flex flex-col pt-[5px] pl-2">
              <div className="flex">
                <Cmd latin caret icon={<Relax />} text="Relax" />
                <Cmd icon={<Create />} text="创建" className="ml-4" />
              </div>
              <Cmd latin caret icon={<Attach />} text="Attach" />
            </div>
          </Panel>

          <Panel title="细分" className="w-[105px]">
            <div className="flex flex-col pt-[5px] pl-[6px]">
              <Cmd latin caret icon={<MSmooth />} text="MSmooth" />
              <Cmd latin caret icon={<Tess />} text="Tessellate" />
              <Cmd icon={<Displace />} text="使用置换..." />
            </div>
          </Panel>

          {[
            { t: "对齐", i: <AlignBig /> },
            { t: "属性", i: <PropsBig /> },
          ].map((b) => (
            <button key={b.t} type="button" className="flex w-[61px] shrink-0 flex-col items-center border-2 border-t-0 border-r-0 border-[#2f2f2f] bg-linear-to-b from-[#767676] to-[#4c4c4c] pt-1 pr-0.5 text-xs text-[#eaeaea]">
              {b.i}
              <span className="leading-6">{b.t}</span>
              <Caret className="mt-auto mb-1" />
            </button>
          ))}
          <div className="flex-1 border-l border-[#2f2f2f]" />
        </div>
      </div>
    </header>
  );
}

function Tool({ label, on, children }: Kids & { label: string; on?: boolean }) {
  return (
    <button type="button" aria-label={label} className={"flex h-[30px] w-8 shrink-0 items-center justify-center " + (on ? "border border-[#222] bg-[#3b7dd8]" : "")}>
      {children}
    </button>
  );
}

function Sep() {
  return <div className="mx-[2px] h-4 w-[2px] shrink-0 bg-[#161616]" />;
}

function Drop({ label, options }: { label: string; options: string[] }) {
  return (
    <div className="relative mb-2 h-5 w-[70px] shrink-0 overflow-hidden border-2 border-[#1b1b1b] bg-[#e6e6e6]">
      <select aria-label={label} className="-mt-0.5 block h-5 w-full appearance-none bg-transparent pl-0.5 text-xs text-black outline-none">
        {options.map((o) => (
          <option key={o}>{o}</option>
        ))}
      </select>
      <div className="pointer-events-none absolute inset-y-0 right-1 flex items-center">
        <Chevron />
      </div>
    </div>
  );
}

function Toolbar() {
  return (
    <div className="relative flex h-10 shrink-0 items-center border-b border-[#1c1c1c] bg-[#444]">
      <div className="mr-px ml-px h-8 w-[3px] shrink-0 border-x border-black" />
      <Tool label="撤消"><Undo /></Tool>
      <Tool label="重做"><Undo flip /></Tool>
      <Sep />
      <Tool label="选择并链接"><Link /></Tool>
      <Tool label="取消链接"><Unlink /></Tool>
      <Tool label="绑定到空间扭曲"><Bind /></Tool>
      <Sep />
      <Drop label="选择过滤器" options={["全部", "几何体", "图形"]} />
      <Tool on label="选择对象"><SelectObj /></Tool>
      <Tool label="按名称选择"><SelectName /></Tool>
      <Tool label="矩形选择区域"><RectSel /></Tool>
      <Tool label="窗口/交叉"><WinSel /></Tool>
      <Sep />
      <Tool label="选择并移动"><Move /></Tool>
      <Tool label="选择并旋转"><Rotate /></Tool>
      <Tool label="选择并缩放"><Scale /></Tool>
      <Tool label="选择并放置"><Place /></Tool>
      <Drop label="参考坐标系" options={["视图", "屏幕", "世界"]} />
      <Tool label="使用轴点中心"><Pivot /></Tool>
      <Sep />
      <Tool label="选择并操纵"><Manip /></Tool>
      <Tool on label="键盘快捷键覆盖切换"><KeyToggle /></Tool>
      <Sep />
      <Tool label="捕捉开关"><Snap3 /></Tool>
      <Tool label="角度捕捉"><SnapAngle /></Tool>
      <Tool label="百分比捕捉"><SnapPct /></Tool>
      <Tool label="微调器捕捉"><SnapSpin /></Tool>
      <Sep />
      <Tool label="编辑命名选择集"><NamedSets /></Tool>
      <div className="relative mb-2 flex h-5 w-[120px] shrink-0 items-center border-2 border-[#1b1b1b] bg-white">
        <input aria-label="命名选择集" defaultValue="创建选择集" className="h-4 w-[98px] bg-[#5c5c5c] px-px text-xs text-black outline-none" />
        <button type="button" aria-label="展开选择集" className="flex flex-1 justify-center"><Chevron /></button>
      </div>
      <Sep />
      <Tool label="镜像"><Mirror /></Tool>
      <Tool label="对齐"><AlignIc /></Tool>
      <Sep />
      <Tool label="场景资源管理器"><SceneList /></Tool>
      <Tool label="层资源管理器"><Layers /></Tool>
      <Sep />
      <div className="relative shrink-0">
        <Tool on label="切换功能区"><RibbonTog /></Tool>
        <div className="pointer-events-none absolute -top-[5px] -right-[5px] bottom-0 -left-px border-2 border-[#ee1c24]" />
      </div>
      <Tool label="曲线编辑器"><Curves /></Tool>
      <div className="min-w-0 flex-1 overflow-hidden pl-px">
        <Tool label="图解视图"><Schematic /></Tool>
      </div>
    </div>
  );
}

function SideBar({ groups, className }: { groups: [string, React.ReactNode][][]; className: string }) {
  return (
    <div className={"flex shrink-0 flex-col items-center overflow-hidden bg-[#444] pt-1 " + className}>
      <div className="mb-0.5 h-px w-8 shrink-0 bg-black" />
      {groups.map((g, i) => (
        <React.Fragment key={i}>
          {i > 0 && <div className="mt-px mb-1.5 h-px w-7 shrink-0 bg-black" />}
          {g.map(([label, icon]) => (
            <button key={label} type="button" aria-label={label} className="flex h-[31px] w-full shrink-0 items-center justify-center">
              {icon}
            </button>
          ))}
        </React.Fragment>
      ))}
    </div>
  );
}

function PlaneMesh() {
  const lines = Array.from({ length: 16 }, (_, i) => i * 15);
  return (
    <svg width="231" height="231" viewBox="0 0 231 231" className="absolute top-[45px] left-[219px]" fill="none" role="img" aria-label="Plane001">
      <defs>
        <linearGradient id="mesh" x1="0" y1="1" x2="1" y2="0">
          <stop offset="0" stopColor="#47b982" />
          <stop offset="1" stopColor="#66c596" />
        </linearGradient>
      </defs>
      <rect x="1" y="1" width="229" height="229" fill="#2a9fd4" />
      <rect x="3" y="2" width="226" height="226" fill="url(#mesh)" />
      {lines.map((v) => (
        <path key={v} d={`M${3.5 + v} 2V228M3 ${2.5 + v}H229`} stroke="#fff" />
      ))}
      <path d="M1.5 2V230" stroke="#2fb0ea" />
      <path d="M.5 58V.5H58M174 .5H230.5V57M230.5 173V230.5H173M58 230.5H.5V173" stroke="#fff" />
      <path d="M100 115.5H115M115.5 115V131" stroke="#000" />
      <path d="M104 107L115 115" stroke="#555" />
      <path d="M115.5 15V115" stroke="#8f3a30" />
      <path d="M115 115.5H216" stroke="#c92a2a" />
      <g fontSize="11" fontFamily="Noto Sans, sans-serif">
        <text x="115" y="13" fill="#b8483a">y</text>
        <text x="214" y="114" fill="#b8483a">x</text>
        <text x="101" y="105" fill="#5c7a6a">z</text>
      </g>
    </svg>
  );
}

function ViewCube() {
  return (
    <div className="absolute top-[14px] right-[15px] h-20 w-20 text-[11px] leading-[11px] text-[#a4a7aa]">
      <svg width="80" height="80" viewBox="0 0 80 80" fill="none" aria-hidden="true">
        <circle cx="40" cy="40" r="30" stroke="#74787e" strokeWidth="6" />
        <circle cx="40" cy="40" r="26" stroke="#4a4c52" strokeWidth="2" />
        <rect x="25" y="25" width="30" height="30" fill="#8b8b8b" stroke="#9c9c9c" />
        <rect x="31" y="31" width="18" height="18" fill="#7d8188" />
      </svg>
      <span className="absolute top-[3px] left-[35px]">北</span>
      <span className="absolute bottom-0 left-[35px]">南</span>
      <span className="absolute top-[35px] left-[2px]">西</span>
      <span className="absolute top-[35px] right-[2px]">东</span>
      <span className="absolute top-[33px] left-[32px] text-[15px] leading-[15px] text-[#656970]">上</span>
    </div>
  );
}

function Viewport() {
  return (
    <main className="relative min-h-0 flex-1 overflow-hidden border-2 border-[#7f6b2a] bg-linear-to-b from-[#1b1b1b] to-[#4d4d4d]">
      <div className="absolute top-[5px] left-[5px] flex gap-[7px] text-[11px] leading-[14px] text-[#dcdcdc]">
        <button type="button">[+]</button>
        <button type="button">[透视 ]</button>
        <button type="button">[真实 + 边面 ]</button>
      </div>
      <PlaneMesh />
      <ViewCube />
      <svg width="36" height="44" viewBox="0 -4 36 44" className="absolute bottom-5 left-6" fill="none" aria-hidden="true">
        <path d="M.5 9V34" stroke="#1d951d" />
        <path d="M1 33.5H26" stroke="#d01010" />
        <g fontSize="11" fontFamily="Noto Sans, sans-serif">
          <text x="1" y="7" fill="#1d951d">y</text>
          <text x="26" y="33" fill="#a51818">x</text>
          <text x="1" y="32" fill="#1010c8">z</text>
        </g>
      </svg>
    </main>
  );
}

function Timeline() {
  return (
    <footer className="shrink-0 bg-[#444]">
      <div className="flex h-[18px] items-stretch gap-px pb-px pl-px text-xs text-[#dedede]">
        <button type="button" aria-label="上一帧" className="w-[15px] border-r border-b border-black leading-[14px]">&lt;</button>
        <button type="button" className="w-[124px] border-r-2 border-b-2 border-black text-[11px] leading-[14px]">0 / 100</button>
        <button type="button" aria-label="下一帧" className="w-[15px] border-r border-b border-black leading-[14px]">&gt;</button>
      </div>
      <div className="flex h-[17px] overflow-hidden border-t border-black">
        <button type="button" aria-label="打开迷你曲线编辑器" className="w-[54px] shrink-0 pt-1 pl-3">
          <Ic w={18} h={12}>
            <path d="M.5 .5H17.5V5.5H.5ZM2 4Q5 0 9 3T16 2M4.5 12V8M2.5 10L4.5 7.5L6.5 10M13.5 7V12M11.5 9.5L13.5 12L15.5 9.5" stroke="#bdbdbd" />
          </Ic>
        </button>
        <div className="relative flex flex-1 bg-[#292929]">
          <div className="absolute top-px bottom-0 -left-1 w-[7px] border-x border-[#5a5212] bg-[#8d8220]" />
          {Array.from({ length: 100 }, (_, i) => (
            <div key={i} className="relative flex-1">
              <div className="h-3 w-px bg-[#686868]" />
              {i % 10 === 0 && (
                <span className="absolute top-3 left-0 -translate-x-1/2 text-[11px] leading-3 text-[#c5b78c]">{i}</span>
              )}
            </div>
          ))}
        </div>
        <div className="relative w-[53px] shrink-0">
          <div className="h-4 w-1 bg-[#292929]">
            <div className="h-3 w-px bg-[#686868]" />
          </div>
          <span className="absolute top-3 -left-[10px] text-[11px] leading-3 text-[#c5b78c]">100</span>
        </div>
      </div>
    </footer>
  );
}

function Check({ text }: { text: string }) {
  return (
    <label className="flex items-center gap-1.5 leading-4">
      <input type="checkbox" className="h-3 w-3 shrink-0 appearance-none border border-t-2 border-l-2 border-[#5a5a5a] border-t-[#151515] border-l-[#151515] checked:bg-[#ddd]" />
      {text}
    </label>
  );
}

function Radio({ text, on }: { text: string; on?: boolean }) {
  return (
    <label className={"flex items-center gap-1.5 leading-4 " + (on ? "text-[#d5d5d5]" : "")}>
      <input type="radio" name="preview" defaultChecked={on} className="h-[10px] w-[10px] shrink-0 appearance-none rounded-full border-2 border-[#1a1a1a] bg-[#555] checked:bg-[#eee]" />
      {text}
    </label>
  );
}

function FlatBtn({ text }: { text: string }) {
  return (
    <button type="button" className="flex h-[18px] flex-1 items-center justify-center border border-[#383838] border-r-[#111] border-b-[#111] pt-0.5 leading-4">
      {text}
    </button>
  );
}

function RolloutHead({ sign, text }: { sign: string; text: string }) {
  return (
    <button type="button" className="relative mr-[3px] ml-[2px] flex h-4 shrink-0 items-center justify-center border border-[#6c6c6c] bg-[#3c3c3c] pt-0.5 text-xs leading-[14px] text-[#f0f0f0]">
      <span className="absolute top-0 left-1 font-bold">{sign}</span>
      {text}
    </button>
  );
}

function SelectRollout() {
  const red = "#f20a0a";
  return (
    <section className="relative flex flex-col">
      <RolloutHead sign="-" text="选择" />
      <div className="-mt-2 flex h-[225px] flex-col border border-[#151515] pt-[14px] pb-1 text-xs text-[#111]">
        <div className="flex h-4 items-center gap-[6px] pl-5">
          <button type="button" aria-label="顶点"><RedVertices /></button>
          <button type="button" aria-label="边"><EdgeTri c={red} /></button>
          <button type="button" aria-label="边界"><Border c={red} /></button>
          <button type="button" aria-label="多边形" className="ml-1">
            <Ic w={16}><rect x="2.5" y="2.5" width="11" height="11" fill="#f00" stroke="#111" /></Ic>
          </button>
          <button type="button" aria-label="元素" className="ml-1">
            <Ic w={16}>
              <path d="M1.5 6.5L5.5 2.5H13.5V9.5L10.5 13.5H1.5Z" fill="#f00" stroke="#111" />
              <path d="M10.5 6.5L13.5 2.5V9.5L10.5 13.5Z" fill="#7a1590" stroke="#111" />
              <path d="M1.5 6.5H10.5" stroke="#111" />
            </Ic>
          </button>
        </div>
        <div className="mt-2 flex flex-col gap-[3px] pr-[6px] pl-[9px]">
          <Check text="按顶点" />
          <Check text="忽略背面" />
          <div className="flex items-center">
            <Check text="按角度:" />
            <span className="ml-auto flex h-4 gap-[2px]">
              <input aria-label="角度" defaultValue="45.0" className="w-[67px] border border-t-2 border-l-2 border-[#4a4a4a] border-t-[#111] border-l-[#111] bg-[#555] pl-0.5 text-[11px] leading-3 text-[#151515] outline-none" />
              <Steppers label="角度" />
            </span>
          </div>
        </div>
        <div className="mt-1 flex flex-col gap-1 pr-1 pl-2">
          <div className="flex gap-[6px]">
            <FlatBtn text="收缩" />
            <FlatBtn text="扩大" />
          </div>
          <div className="flex gap-[6px]">
            <span className="flex flex-1 gap-[2px]"><FlatBtn text="环形" /><Steppers label="环形" /></span>
            <span className="flex flex-1 gap-[2px]"><FlatBtn text="循环" /><Steppers label="循环" /></span>
          </div>
        </div>
        <fieldset className="relative mt-[10px] mr-[3px] h-8 border border-[#151515]">
          <legend className="absolute -top-[7px] left-1.5 bg-[#444] px-0.5 leading-[14px] text-[#d5d5d5]">预览选择</legend>
          <div className="flex items-center justify-between pt-[10px] pr-1 pl-0.5">
            <Radio on text="禁用" />
            <Radio text="子对象" />
            <Radio text="多个" />
          </div>
        </fieldset>
        <div className="mt-2 pr-[11px] text-right leading-4 text-[#c8c8c8]">选定整个对象</div>
      </div>
    </section>
  );
}

function CommandPanel() {
  const tabs: [string, React.ReactNode][] = [
    ["创建", <TabStar />],
    ["修改", <TabModify />],
    ["层次", <TabHier />],
    ["运动", <TabMotion />],
    ["显示", <TabDisplay />],
    ["实用程序", <TabUtil />],
  ];
  return (
    <aside className="flex w-[184px] shrink-0 flex-col overflow-hidden bg-[#444] pt-[3px]">
      <div className="flex h-6 border-b border-black pr-2 pl-0.5">
        {tabs.map(([l, icon], i) => (
          <button key={l} type="button" aria-label={l} className={"flex flex-1 items-center justify-center rounded-t-[4px] border-t border-r border-black " + (i === 1 ? "-mb-px bg-[#444]" : "bg-[#3f3f3f]")}>
            {icon}
          </button>
        ))}
      </div>
      <div className="mt-1.5 flex h-5 gap-1 pr-[7px] pl-[11px]">
        <input aria-label="对象名称" defaultValue="Plane001" className="min-w-0 flex-1 border border-t-2 border-l-2 border-[#333] border-t-[#151515] border-l-[#151515] bg-[#555] pl-px text-[11px] text-[#e4e4e4] outline-none" />
        <button type="button" aria-label="对象颜色" className="w-4 border border-black bg-[#2dba7e]" />
      </div>
      <div className="relative mt-[5px] mr-[9px] ml-[11px] h-[23px] overflow-hidden border-2 border-[#1e1e1e] bg-[#555]">
        <select aria-label="修改器列表" className="-mt-0.5 block h-[23px] w-full appearance-none bg-transparent pl-px text-xs text-[#dedede] outline-none">
          <option>修改器列表</option>
        </select>
        <div className="pointer-events-none absolute inset-y-0 right-0 flex w-[17px] items-center justify-center bg-white">
          <Chevron />
        </div>
      </div>
      <div className="mt-[5px] mr-[11px] ml-[11px] h-[127px] shrink-0 border-2 border-white bg-[#555]">
        <button type="button" className="flex h-4 w-full items-center gap-1.5 border-b border-[#7a7a7a] bg-[#444] pt-0.5 pl-1.5 text-xs leading-[14px] text-[#e4e4e4]">
          <Ic w={9}><rect width="9" height="9" fill="#0c0c0c" /><path d="M2 4.5H7M4.5 2V7" stroke="#888" /></Ic>
          可编辑多边形
        </button>
      </div>
      <div className="mt-[7px] flex h-4 shrink-0 items-center pr-5 pl-[15px]">
        <button type="button" aria-label="锁定堆栈"><Pin c="#fff" /></button>
        <i className="ml-2 h-4 w-px bg-black" />
        <button type="button" aria-label="显示最终结果" className="ml-[13px]"><StackTube /></button>
        <i className="ml-[14px] h-4 w-px bg-black" />
        <button type="button" aria-label="使唯一" className="ml-[10px]"><Unique /></button>
        <button type="button" aria-label="移除修改器" className="ml-[10px]"><Mouse /></button>
        <i className="ml-[13px] h-4 w-px bg-black" />
        <button type="button" aria-label="配置修改器集" className="ml-2"><ConfigSets /></button>
      </div>
      <div className="mt-[15px] mr-[15px] ml-1 h-[2px] shrink-0 bg-[#0c0c0c]" />
      <div className="mt-[7px] ml-1 flex min-h-0 flex-1">
        <div className="flex min-w-0 flex-1 flex-col border-t border-black pt-[5px] pr-[2px] pl-[3px]">
          <SelectRollout />
          <div className="mt-2 flex flex-col gap-[3px]">
            <RolloutHead sign="+" text="软选择" />
            <RolloutHead sign="+" text="编辑几何体" />
          </div>
        </div>
        <div className="mr-[7px] flex w-1 shrink-0 flex-col bg-[#c4c4c4]">
          <div className="h-12 bg-[#0c0c0c]" />
        </div>
      </div>
    </aside>
  );
}

function Watermark() {
  return (
    <div className="pointer-events-none absolute right-10 bottom-[34px] flex items-center gap-2 text-[30px] leading-10 text-white">
      <Ic w={48} h={44}>
        <g fill="#ececec">
          <path d="M17 1C8 1 1 7 1 15C1 20 4 24 8 26L6 32L12 28.5Q15 29.5 18 29C17 18 25 13 34 13.5C32 6 25 1 17 1Z" />
          <path d="M33 15C25 15 18.5 20 18.5 27.5C18.5 35 25 40 33 40Q36 40 38.5 39L44 42L42.5 37C46 34.5 48 31.5 48 27.5C48 20 41 15 33 15Z" />
        </g>
        <g fill="#4b4b4b">
          <circle cx="11" cy="11" r="2.2" />
          <circle cx="24" cy="11" r="2.2" />
          <circle cx="28" cy="23" r="1.9" />
          <circle cx="38" cy="23" r="1.9" />
        </g>
      </Ic>
      <span className="font-['Noto_Sans_CJK_SC',sans-serif]">3DMax教程资源</span>
    </div>
  );
}

const simTools: [string, React.ReactNode][][] = [
  [["爆炸模拟", <Nuke />], ["海洋模拟", <Ocean />], ["火焰模拟", <FireBall />], ["液体模拟", <Pool />], ["粒子", <Dots />]],
  [["播放", <Play />], ["暂停", <Pause />], ["停止", <Stop />], ["删除", <Trash />]],
  [["火焰", <FireA />], ["爆炸", <Burst />], ["浓烟", <Cloud />], ["香烟", <Smoke />], ["蜡烛", <Candle />], ["云雾", <Haze />]],
  [["水滴", <Drops />]],
];

const renderTools: [string, React.ReactNode][][] = [
  [["渲染", <Teapot />], ["渲染帧窗口", <Render />], ["渲染设置", <Setup />], ["材质编辑器", <Sliders />]],
  [["灯光列表", <LightPanel />]],
  [["物理摄影机", <Camera />], ["穹顶摄影机", <DomeCam />], ["立体摄影机", <Camera3D />]],
  [["平面灯光", <AreaLight />], ["穹顶灯光", <DomeLight />], ["球体灯光", <SphereLight />], ["网格灯光", <MeshPot />], ["光域网灯光", <Spot />], ["太阳光", <Sun />], ["环境光", <Ambient />]],
  [["散布", <Scatter />]],
];

export default function App() {
  return (
    <div className="relative flex h-screen flex-col overflow-hidden bg-[#444] font-['Noto_Sans','Noto_Sans_CJK_SC',sans-serif]">
      <Ribbon />
      <Toolbar />
      <div className="flex min-h-0 flex-1">
        <SideBar groups={simTools} className="w-[36px] border-r-2 border-[#161616] pr-0.5" />
        <SideBar groups={renderTools} className="w-[41px] border-r-2 border-[#161616]" />
        <div className="flex min-w-0 flex-1 flex-col">
          <Viewport />
          <Timeline />
        </div>
        <CommandPanel />
      </div>
      <Watermark />
    </div>
  );
}
